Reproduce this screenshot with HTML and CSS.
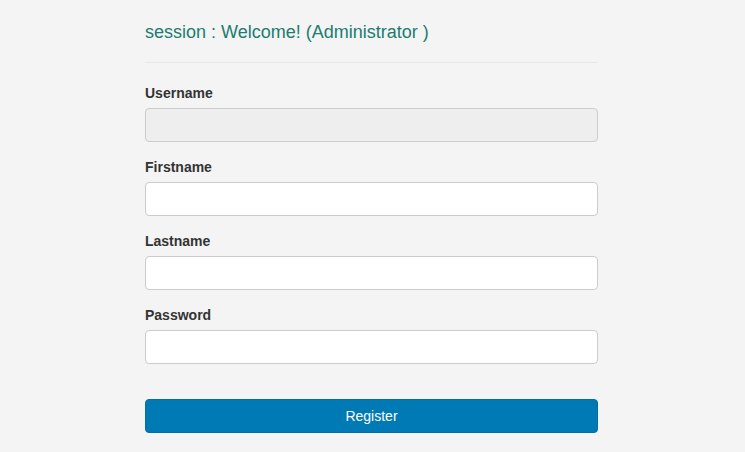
FILE: index.html
```html
<!DOCTYPE html>
<html lang="en">
<head>
  <meta charset="UTF-8" />
  <title>Register</title>
  <link rel="stylesheet" href="styles.css">
</head>
<body>
  <div class="container">
    <h4 class="session">session : Welcome! (Administrator )</h4>
    <hr>
    <form class="register-form">
      <div class="form-group">
        <label for="username">Username</label>
        <input type="text" id="username" class="form-control" disabled>
      </div>
      <div class="form-group">
        <label for="firstname">Firstname</label>
        <input type="text" id="firstname" class="form-control">
      </div>
      <div class="form-group">
        <label for="lastname">Lastname</label>
        <input type="text" id="lastname" class="form-control">
      </div>
      <div class="form-group">
        <label for="password">Password</label>
        <input type="password" id="password" class="form-control">
      </div>
      <button type="button" class="btn-register">Register</button>
    </form>
  </div>
</body>
</html>
```

FILE: styles.css
```css
body {
  font-family: 'Liberation Sans', Arial, sans-serif;
  font-size: 14px;
  background: #f4f4f4;
  color: #333;
  margin: 0;
}
.container {
  width: 453px;
  margin-left: 145px;
  padding-top: 22px;
}
.session {
  font-size: 18px;
  font-weight: normal;
  line-height: 20px;
  color: #207c70;
  margin: 0;
}
hr {
  border: 0;
  border-top: 1px solid #e8e8e8;
  margin: 20px 0;
}
.form-group {
  margin-bottom: 15px;
}
label {
  display: block;
  font-weight: bold;
  line-height: 20px;
  margin-bottom: 5px;
  color: #333;
}
.form-control {
  display: block;
  box-sizing: border-box;
  width: 100%;
  height: 34px;
  padding: 6px 12px;
  font-size: 14px;
  background: #fff;
  border: 1px solid #ccc;
  border-radius: 4px;
}
.form-control:disabled {
  background: #eee;
}
.btn-register {
  display: block;
  box-sizing: border-box;
  width: 100%;
  height: 34px;
  margin-top: 35px;
  font-family: 'Liberation Sans', Arial, sans-serif;
  font-size: 14px;
  color: #fff;
  background: #007ab5;
  border: 1px solid #006da3;
  border-radius: 4px;
}
```
